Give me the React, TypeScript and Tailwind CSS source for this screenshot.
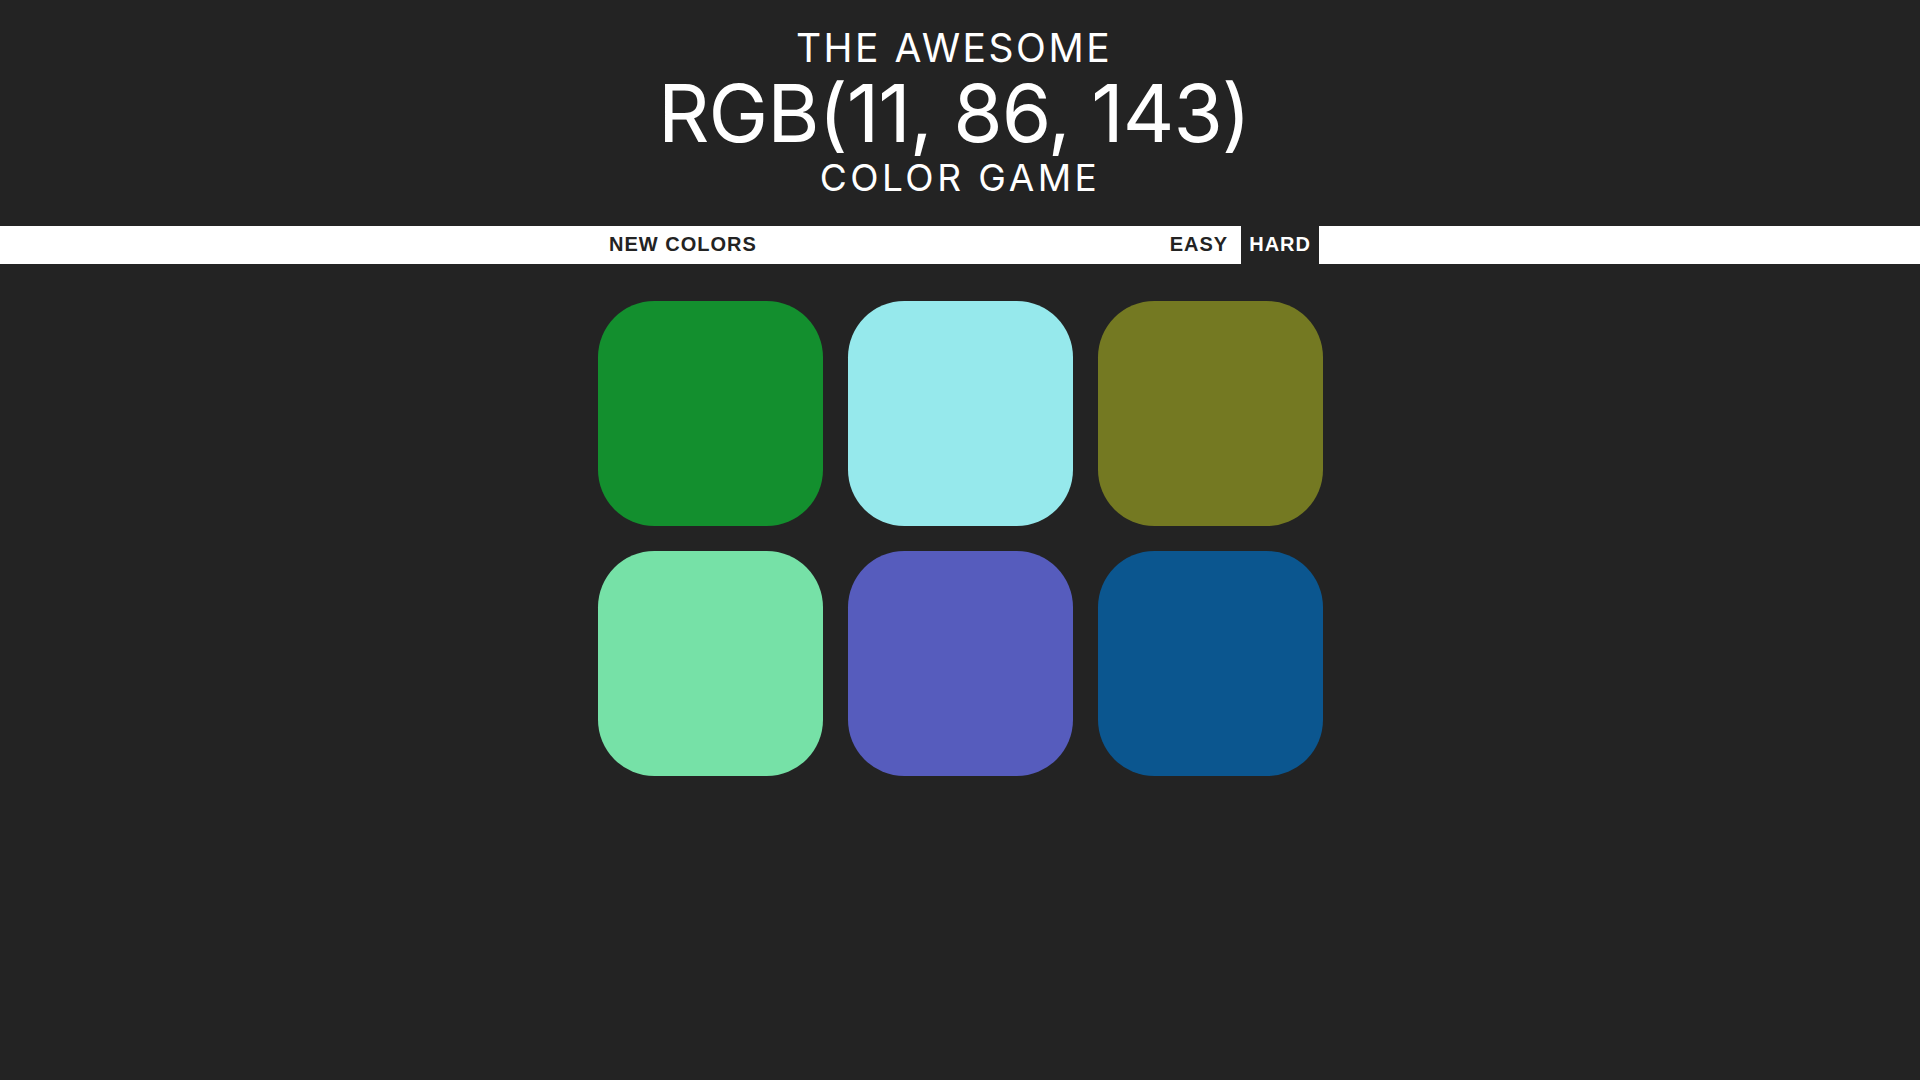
import React from "react";

const colors = [
  "#138f2e",
  "#96e9ec",
  "#747922",
  "#76e1a7",
  "#565cbd",
  "#0b568f",
];

export default function App() {
  return (
    <div className="min-h-screen w-full bg-[#232323]">
      <h1
        className="m-0 flex flex-col items-center pt-[26px] pb-[26px] font-normal uppercase text-white"
        style={{ fontFamily: "Inter, 'Open Sans', sans-serif" }}
      >
        <span className="block h-[43px] pr-[12px] text-[39px] leading-[43px] tracking-[2.5px]">
          The Awesome
        </span>
        <span className="block h-[87px] pr-[12px] text-[80px] leading-[87px] tracking-[-1px]">
          RGB(11, 86, 143)
        </span>
        <span className="block h-[44px] text-[37px] leading-[44px] tracking-[3.5px]">
          Color Game
        </span>
      </h1>
      <div className="h-[38px] w-full bg-white">
        <div
          className="mx-auto flex h-full w-[718px] items-stretch justify-between font-bold uppercase text-[20px] tracking-[1px]"
          style={{ fontFamily: "'Liberation Sans', Arial, sans-serif" }}
        >
          <button className="h-full px-[8px] pb-[2px] text-[#232323] uppercase">
            New Colors
          </button>
          <div className="flex h-full">
            <button className="h-full pl-[8px] pr-[13px] pb-[2px] text-[#232323] uppercase">
              Easy
            </button>
            <button className="h-full bg-[#232323] px-[8px] pb-[2px] text-white uppercase">
              Hard
            </button>
          </div>
        </div>
      </div>
      <div className="grid grid-cols-[repeat(3,225px)] justify-center gap-[25px] pt-[37px]">
        {colors.map((c) => (
          <div
            key={c}
            className="h-[225px] w-[225px] rounded-[25%]"
            style={{ backgroundColor: c }}
          />
        ))}
      </div>
    </div>
  );
}
